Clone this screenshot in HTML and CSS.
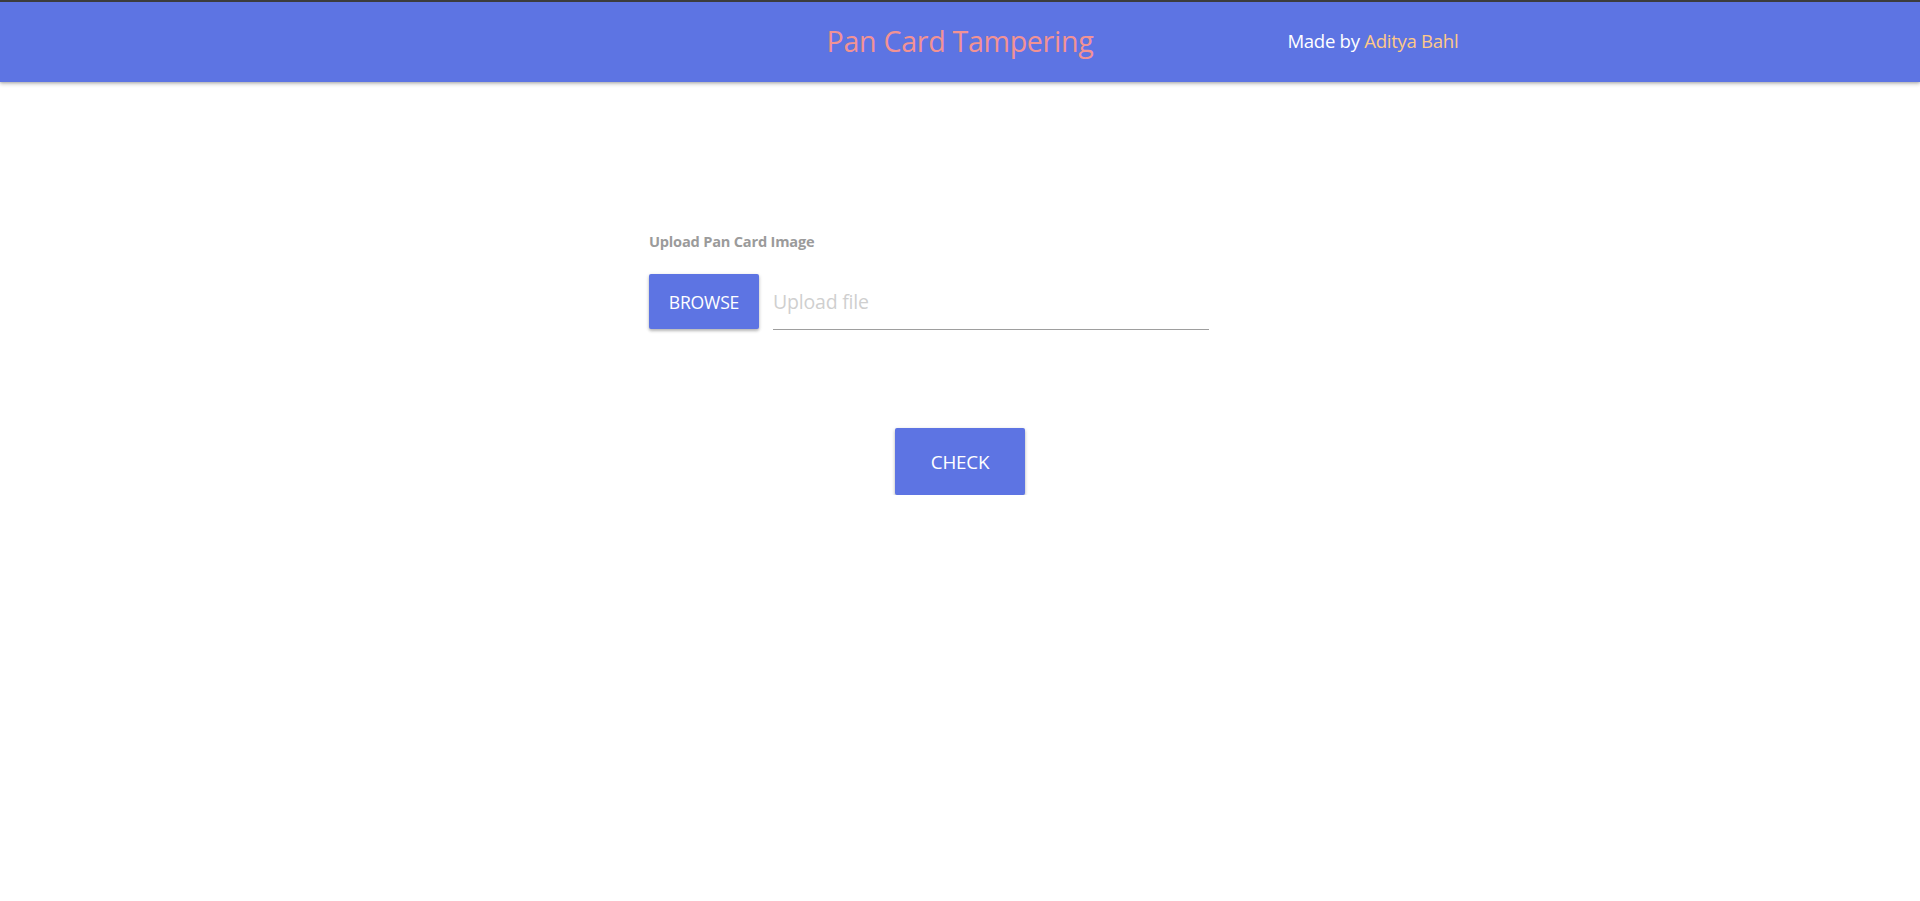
FILE: index.html
```html
<!DOCTYPE html>
<html lang="en">
<head>
<meta charset="utf-8">
<title>Pan Card Tampering</title>
<link rel="stylesheet" href="styles.css">
</head>
<body>
<nav class="topbar">
  <div class="nav-inner">
    <span class="brand">Pan Card Tampering</span>
    <span class="credit">Made by <span class="name">Aditya Bahl</span></span>
  </div>
</nav>
<main class="content">
  <form class="upload-form">
    <label class="field-label">Upload Pan Card Image</label>
    <div class="file-row">
      <span class="btn browse">BROWSE</span>
      <input class="file-path" type="text" placeholder="Upload file">
    </div>
  </form>
  <div class="actions">
    <button class="btn check" type="button">CHECK</button>
  </div>
</main>
</body>
</html>
```

FILE: styles.css
```css
html, body {
  margin: 0;
  padding: 0;
  background: #ffffff;
}

body {
  font-family: "Open Sans", "Noto Sans", sans-serif;
  border-top: 2px solid #3c3c3c;
}

.topbar {
  background: #5d74e3;
  height: 80px;
  box-shadow: 0 2px 4px rgba(0, 0, 0, 0.22), 0 1px 2px rgba(0, 0, 0, 0.14);
  position: relative;
  z-index: 1;
}

.nav-inner {
  display: grid;
  grid-template-columns: 1fr auto 1fr;
  align-items: center;
  height: 100%;
  box-sizing: border-box;
  padding-bottom: 4px;
}

.brand {
  grid-column: 2;
  color: #f29294;
  font-size: 28.6px;
  letter-spacing: -0.3px;
}

.credit {
  grid-column: 3;
  justify-self: start;
  margin-left: 194px;
  color: #ffffff;
  font-size: 18.6px;
  letter-spacing: -0.3px;
}

.name {
  color: #ffc987;
}

.content {
  padding-top: 149px;
}

.upload-form {
  width: 622px;
  margin: 0 auto;
}

.field-label {
  display: block;
  color: #9b9b9b;
  font-size: 14.6px;
  font-weight: 700;
  letter-spacing: -0.2px;
  line-height: 20px;
}

.file-row {
  display: flex;
  align-items: stretch;
  gap: 14px;
  width: 560px;
  margin-top: 23px;
}

.btn {
  background: #5d74e3;
  color: #ffffff;
  border: none;
  border-radius: 2px;
  box-shadow: 0 2px 3px rgba(0, 0, 0, 0.22), 0 1px 4px rgba(0, 0, 0, 0.12);
  font-family: inherit;
  text-transform: uppercase;
  display: flex;
  align-items: center;
  justify-content: center;
  letter-spacing: -0.2px;
}

.browse {
  width: 110px;
  height: 55px;
  font-size: 17.6px;
}

.file-path {
  flex: 1;
  border: none;
  border-bottom: 1px solid #9e9e9e;
  outline: none;
  background: transparent;
  font-family: inherit;
  font-size: 19.5px;
  padding: 0 0 1px 0;
  margin: 0 0 -1px 0;
  color: #333;
}

.file-path::placeholder {
  color: #cfcfcf;
  letter-spacing: -0.2px;
}

.actions {
  display: flex;
  justify-content: center;
  margin-top: 99px;
}

.check {
  width: 130px;
  height: 67px;
  font-size: 18.8px;
  cursor: pointer;
}
```
